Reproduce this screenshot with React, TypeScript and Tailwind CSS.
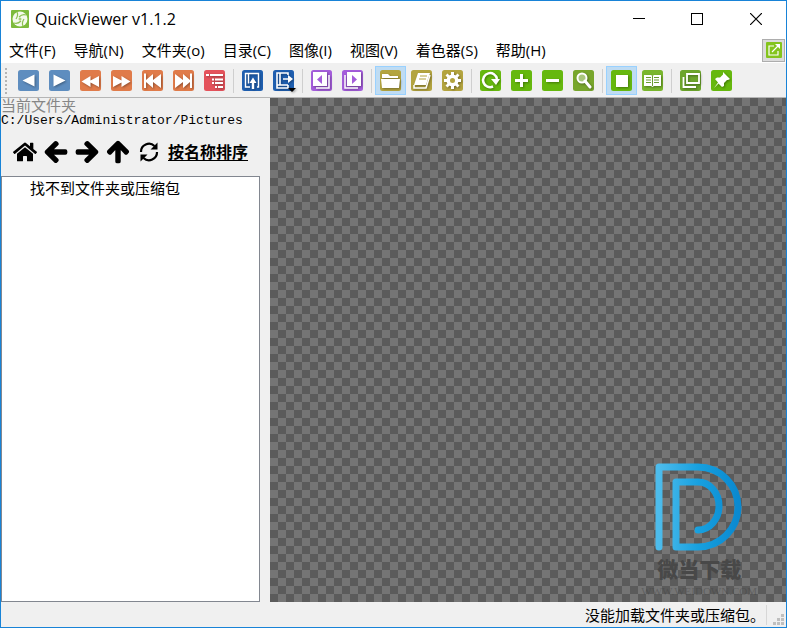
import type { ReactNode } from "react";
import { FaArrowLeft, FaArrowRight, FaArrowUp, FaHome } from "react-icons/fa";

type Tool = {
  label: string;
  color: string;
  art: ReactNode;
  active?: boolean;
};

const BLUE = "#5e8dbf";
const ORANGE = "#e07b4a";
const NAVY = "#1f5fb0";
const PURPLE = "#a45ddb";
const OLIVE = "#b3a43f";
const GREEN = "#66b80e";

const menus = ["文件(F)", "导航(N)", "文件夹(o)", "目录(C)", "图像(I)", "视图(V)", "着色器(S)", "帮助(H)"];

const toolGroups: Tool[][] = [
  [
    { label: "上一页", color: BLUE, art: <path d="M4.500 10.500 16.500 4.500v12z" /> },
    { label: "下一页", color: BLUE, art: <path d="M16.500 10.500 4.500 4.500v12z" /> },
    { label: "快退", color: ORANGE, art: <path d="M1.500 11.500 10.500 6v4.500L19 6v11l-8.500-4.500V17z" /> },
    { label: "快进", color: ORANGE, art: <path d="M19.500 11.500 10.500 6v4.500L2 6v11l8.500-4.500V17z" /> },
    { label: "第一页", color: ORANGE, art: <path d="M2 3.500h2v6.500L11 4v6l8-6v14l-8-6v6l-7-6v6H2z" /> },
    { label: "最后一页", color: ORANGE, art: <path d="M19 3.500h-2v6.500L10 4v6L2 4v14l8-6v6l7-6v6h2z" /> },
    {
      label: "页面列表",
      color: "#e4525b",
      art: (
        <g fill="none" stroke="#fff" strokeWidth="2">
          <path d="M2 5h3m1 0h13M8 9.500h2m1 0h8M8 13h2m1 0h8M11 17h2m1 0h5" />
        </g>
      ),
    },
  ],
  [
    {
      label: "打开上级",
      color: NAVY,
      art: (
        <>
          <path
            d="M8 17H3.500V3.500h13V17H15M6.500 3.500v10"
            fill="none"
            stroke="#fff"
            strokeWidth="1.400"
          />
          <path d="M9.800 19v-6H7.500L11 7.500l3.500 5.500h-2.300v6z" />
        </>
      ),
    },
    {
      label: "打开方式",
      color: NAVY,
      art: (
        <>
          <path
            d="M15 5V3H4v15h11v-3M7 3v12M4 15h11M10 9h7"
            fill="none"
            stroke="#fff"
            strokeWidth="1.600"
          />
          <path d="m15 5 5 4-5 4z" />
          <path d="M15 18h8l-4 4z" fill="#000" />
        </>
      ),
    },
  ],
  [
    {
      label: "上一卷",
      color: PURPLE,
      art: (
        <>
          <path d="M2 2h14v14H2z" />
          <path d="M18 5v13H5" fill="none" stroke="#fff" strokeWidth="1.500" />
          <path d="M6 9.500 11 5v9z" fill={PURPLE} />
        </>
      ),
    },
    {
      label: "下一卷",
      color: PURPLE,
      art: (
        <>
          <path d="M5 2h14v14H5z" />
          <path d="M3 5v13h13" fill="none" stroke="#fff" strokeWidth="1.500" />
          <path d="M15 9.500 10 5v9z" fill={PURPLE} />
        </>
      ),
    },
  ],
  [
    {
      label: "文件夹",
      color: OLIVE,
      active: true,
      art: <path d="M2 4h6l2 2h8v2H2zM1 9h19l-1 9H2z" />,
    },
    {
      label: "书架",
      color: OLIVE,
      art: (
        <>
          <path d="M7 3h12l-4 12H3z" />
          <path d="m3 15v3h12l4-13" fill="none" stroke="#fff" strokeWidth="1.500" />
          <path d="M9 6h7M8 9h7" stroke={OLIVE} strokeWidth="1.200" />
        </>
      ),
    },
    {
      label: "选项",
      color: OLIVE,
      art: (
        <>
          <path d="M9 2h3v17H9zM2 9h17v3H2z" />
          <path d="m5.500 3.500 12 12-2 2-12-12zM3.500 15.500l12-12 2 2-12 12z" />
          <circle cx="10.500" cy="10.500" r="6" />
          <circle cx="10.500" cy="10.500" r="2.500" fill={OLIVE} />
        </>
      ),
    },
  ],
  [
    {
      label: "旋转",
      color: GREEN,
      art: (
        <>
          <path d="M13 16.500A7 7 0 1 1 17 9" fill="none" stroke="#fff" strokeWidth="2.500" />
          <path d="M11 9h9l-4 6z" />
        </>
      ),
    },
    { label: "放大", color: GREEN, art: <path d="M9 4h3v5h5v3h-5v5H9v-5H4V9h5z" /> },
    { label: "缩小", color: GREEN, art: <path d="M4 9h13v3H4z" /> },
    {
      label: "适应窗口",
      color: "#78a62c",
      art: (
        <>
          <circle cx="9" cy="8" r="4.500" fill="#a9c67d" stroke="#fff" strokeWidth="2" />
          <path d="m12 11 5 6" stroke="#fff" strokeWidth="3" strokeLinecap="round" />
        </>
      ),
    },
  ],
  [
    { label: "单页", color: GREEN, active: true, art: <path d="M5 5h12v12H5z" /> },
    {
      label: "双页",
      color: "#79b62d",
      art: (
        <>
          <path d="M2 5h7l1.500 1L12 5h7v11h-7l-1.500 1L9 16H2z" />
          <path
            d="M10.500 6v10M4 7.500h5M4 10h5M4 12.500h5M12 7.500h5M12 10h5M12 12.500h5"
            stroke="#6a9b30"
            strokeWidth="1"
          />
        </>
      ),
    },
  ],
  [
    {
      label: "全屏",
      color: "#6ca52c",
      art: (
        <g fill="none" stroke="#fff" strokeWidth="1.800">
          <path d="M7 4h12v9H7z" />
          <path d="M3.500 7v10H16" />
        </g>
      ),
    },
    {
      label: "置顶",
      color: GREEN,
      art: <path d="m12 2 7 7-2 1h-1l-3 3v3l-2 1-3.500-3.500L3 18l4-5.500L4 9l2-1.500h3l3-3z" />,
    },
  ],
];

function ToolButton({ tool }: { tool: Tool }) {
  return (
    <button
      type="button"
      aria-label={tool.label}
      aria-pressed={tool.active}
      className={
        tool.active
          ? "flex h-[29px] w-[31px] shrink-0 items-center justify-center border border-[#99d1ff] bg-[#bfdcf3]"
          : "flex h-[29px] w-[31px] shrink-0 items-center justify-center border border-transparent hover:bg-[#d8eaf9]"
      }
    >
      <svg viewBox="0 0 21 21" className="size-[21px] overflow-visible" fill="#fff">
        <rect width="21" height="21" rx="2.500" fill={tool.color} />
        <g className="drop-shadow-[1px_1px_1px_rgba(0,0,0,0.35)]">{tool.art}</g>
      </svg>
    </button>
  );
}

function AppIcon() {
  return (
    <svg viewBox="0 0 18 18" className="size-[18px]">
      <rect width="18" height="18" rx="1" fill="#7dbb3c" />
      <circle cx="9" cy="9" r="7.500" fill="#f4faec" />
      <g fill="none" stroke="#8cc152" strokeWidth="1.200">
        <path d="M6 2c1 2 1 4-1 7M15 5c-3-1-5 0-7 2M12 16c-1-2-1-4 1-7M3 13c3 1 5 0 7-2" />
      </g>
      <circle cx="9" cy="9" r="1.500" fill="#a9d07c" />
    </svg>
  );
}

function TitleBar() {
  return (
    <header className="flex h-9 items-center justify-between bg-white pl-[10px]">
      <div className="flex items-center gap-[6px]">
        <AppIcon />
        <h1 className="text-[16px] leading-5">QuickViewer v1.1.2</h1>
      </div>
      <div className="flex h-full">
        <button type="button" aria-label="最小化" className="flex w-[58px] items-center justify-center">
          <svg viewBox="0 0 12 12" className="size-3" shapeRendering="crispEdges">
            <path d="M0 5.500h12" stroke="#000" />
          </svg>
        </button>
        <button type="button" aria-label="最大化" className="flex w-[58px] items-center justify-center">
          <svg viewBox="0 0 12 12" className="size-3" shapeRendering="crispEdges">
            <path d="M.5.5h11v11H.5z" fill="none" stroke="#000" />
          </svg>
        </button>
        <button type="button" aria-label="关闭" className="flex w-[60px] items-center justify-center">
          <svg viewBox="0 0 12 12" className="size-3">
            <path d="m0 0 12 12M12 0 0 12" stroke="#000" strokeWidth="1.200" />
          </svg>
        </button>
      </div>
    </header>
  );
}

function MenuBar() {
  return (
    <nav className="flex h-[27px] items-center justify-between border-b border-[#f0f0f0] bg-white pr-px">
      <div className="flex gap-[2px]">
        {menus.map((menu) => (
          <button key={menu} type="button" className="px-2 text-[15px] leading-5 whitespace-nowrap">
            {menu}
          </button>
        ))}
      </div>
      <button
        type="button"
        aria-label="弹出窗口"
        className="flex size-[23px] items-center justify-center border border-[#adadad] bg-[#dcdcdc]"
      >
        <svg viewBox="0 0 16 16" className="size-4" fill="none" stroke="#fff" strokeWidth="1.200">
          <rect width="16" height="16" rx="1" fill="#84c41c" stroke="none" />
          <path d="M8 4H3v9h9V9M6 10l6-6" />
          <path d="M9 2h5v5z" fill="#fff" stroke="none" />
        </svg>
      </button>
    </nav>
  );
}

function Toolbar() {
  return (
    <div role="toolbar" className="flex h-[34px] items-center border-b border-[#b5b5b5]">
      <svg viewBox="0 0 12 28" className="h-7 w-3 shrink-0">
        <path d="M5 1v27" stroke="#b4b4b4" strokeWidth="2" strokeDasharray="2 2" />
      </svg>
      {toolGroups.map((group, i) => (
        <div key={group[0].label} className="flex items-center">
          {i > 0 && <div className="mx-[3px] h-6 w-px bg-[#cfcfcf]" />}
          {group.map((tool) => (
            <ToolButton key={tool.label} tool={tool} />
          ))}
        </div>
      ))}
    </div>
  );
}

function FolderPanel() {
  return (
    <aside className="flex w-[259px] shrink-0 flex-col">
      <p className="text-[15px] leading-[14px] text-[#868686]">当前文件夹</p>
      <p className="font-['Liberation_Mono',monospace] text-[13px] leading-[18px]">
        C:/Users/Administrator/Pictures
      </p>
      <div className="flex h-11 items-center gap-[7px] pl-3">
        <button type="button" aria-label="主页">
          <FaHome className="size-6" />
        </button>
        <button type="button" aria-label="后退">
          <FaArrowLeft className="size-6 overflow-visible stroke-[36]" />
        </button>
        <button type="button" aria-label="前进">
          <FaArrowRight className="size-6 overflow-visible stroke-[36]" />
        </button>
        <button type="button" aria-label="向上">
          <FaArrowUp className="size-6 overflow-visible stroke-[36]" />
        </button>
        <button type="button" aria-label="刷新">
          <svg viewBox="0 0 24 24" className="size-6" fill="none" stroke="#000" strokeWidth="2.200">
            <path d="M4 12a8 8 0 0 1 13.500-6M20 12a8 8 0 0 1-13.500 6" />
            <path d="M20.500 2.500v7h-7zM3.500 21.500v-7h7z" fill="#000" stroke="none" />
          </svg>
        </button>
        <button type="button" className="text-[16px] leading-5 font-bold underline underline-offset-2">
          按名称排序
        </button>
      </div>
      <div className="mt-[2px] flex-1 border border-[#828790] bg-white">
        <ul className="py-px">
          <li className="pl-7 text-[15px] leading-5">找不到文件夹或压缩包</li>
        </ul>
      </div>
    </aside>
  );
}

function Watermark() {
  return (
    <div className="absolute right-[29px] bottom-[3px] flex flex-col items-center">
      <svg viewBox="0 0 88 88" className="size-[88px]">
        <defs>
          <linearGradient id="brand" x1="0" y1="0" x2="1" y2="0">
            <stop offset="0" stopColor="#4dbcec" />
            <stop offset=".5" stopColor="#17a0df" />
            <stop offset="1" stopColor="#0a89d0" />
          </linearGradient>
        </defs>
        <path
          d="M4 84V4H43A40 40 0 0 1 43 84H21V19H43A21 24 0 0 1 43 67"
          fill="none"
          stroke="url(#brand)"
          strokeWidth="7"
          strokeLinecap="round"
          strokeLinejoin="round"
        />
      </svg>
      <p className="mt-1 text-[21px] leading-7 font-black text-[#484848]">微当下载</p>
      <p className="font-['Liberation_Serif',serif] text-[11px] leading-4 text-[#404040]/40">
        WWW.WEIDOWN.COM
      </p>
    </div>
  );
}

export default function App() {
  return (
    <div className="flex min-h-screen flex-col border border-[#1883d7] bg-[#f0f0f0] font-['Open_Sans','Noto_Sans_CJK_SC',sans-serif] text-black">
      <TitleBar />
      <MenuBar />
      <Toolbar />
      <main className="flex flex-1 gap-[10px]">
        <FolderPanel />
        <section
          aria-label="图像"
          className="relative flex-1 bg-[repeating-conic-gradient(#757575_0_25%,#5b5b5b_0_50%)] bg-[length:16px_16px]"
        >
          <Watermark />
        </section>
      </main>
      <footer className="flex h-[25px] items-center justify-end">
        <p className="text-[15px] leading-5">没能加载文件夹或压缩包。</p>
        <div className="ml-px h-5 w-px bg-[#d7d7d7]" />
        <svg viewBox="0 0 19 25" className="h-[25px] w-[19px]" fill="#bfbfbf">
          <path d="M14 12h3v3h-3zM14 16h3v3h-3zM14 20h3v3h-3zM10 16h3v3h-3zM10 20h3v3h-3zM6 20h3v3H6z" />
        </svg>
      </footer>
    </div>
  );
}
